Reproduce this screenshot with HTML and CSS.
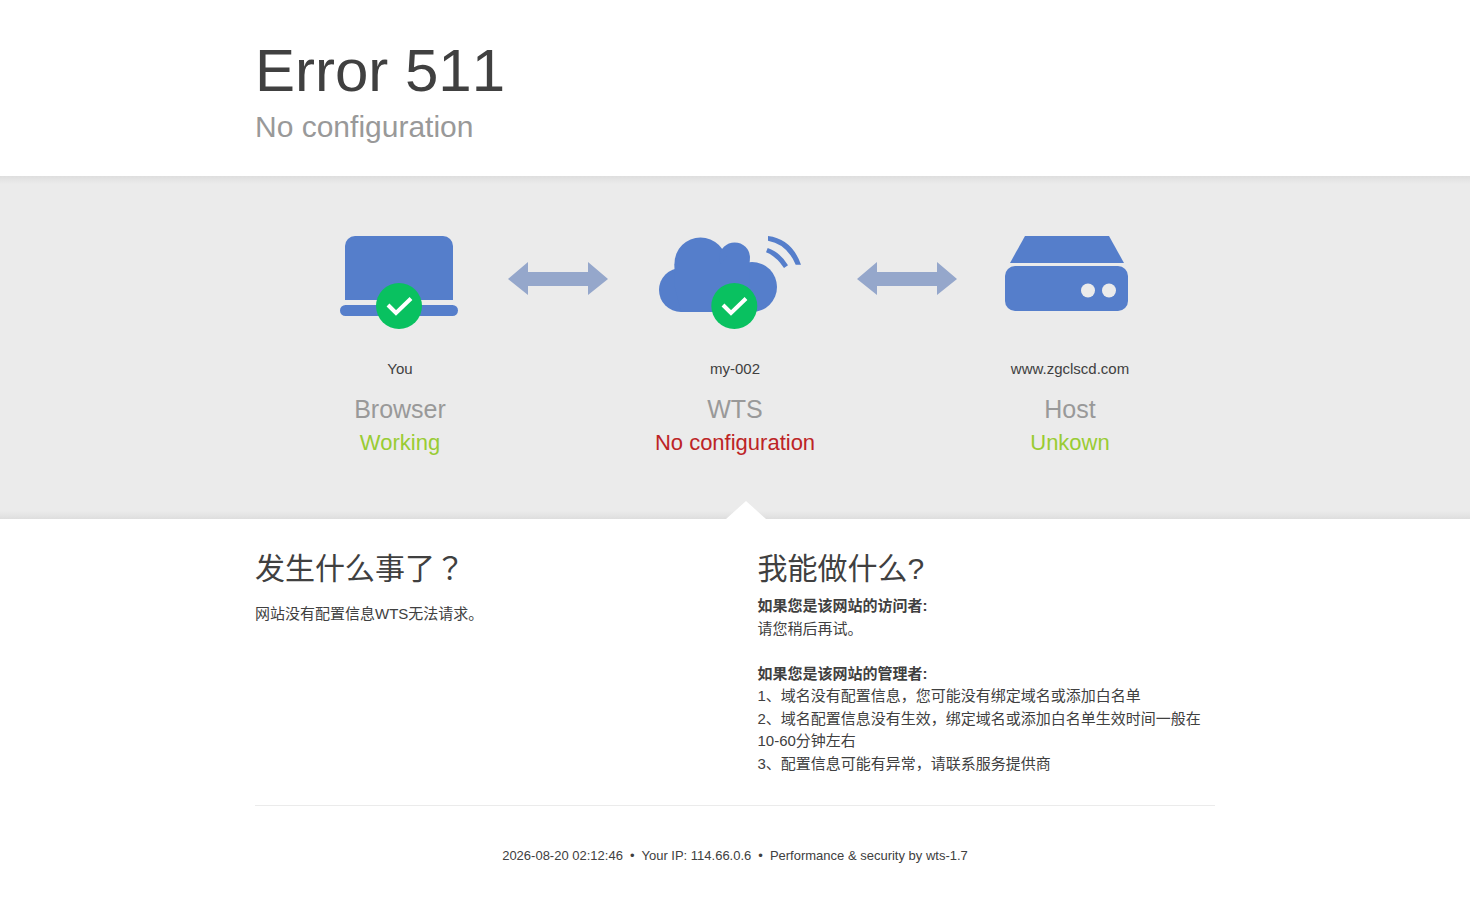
FILE: index.html
```
<!DOCTYPE html>
<html lang="en">
<head>
    <meta charset="UTF-8">
    <meta name="viewport" content="width=device-width, initial-scale=1.0">
    <title>Error 511 - No configuration</title>
    <link rel="stylesheet" href="styles.css">
</head>

<body>
    <header class="wrapper header">
        <h1>Error 511</h1>
        <p class="subtitle">No configuration</p>
    </header>

    <section class="status">
        <div class="wrapper status-row">
            <div class="status-item">
                <svg class="icon" width="120" height="95" viewBox="0 0 120 95" aria-hidden="true">
                    <path class="shape" d="M5 64V10A10 10 0 0 1 15 0H103A10 10 0 0 1 113 10V64Z"/>
                    <rect class="shape" x="0" y="69" width="118" height="11" rx="5.5"/>
                    <circle class="badge" cx="59" cy="70" r="23"/>
                    <path class="check" d="M48 69L56 77L71 62.5"/>
                </svg>
                <span class="name">You</span>
                <h3>Browser</h3>
                <span class="state ok">Working</span>
            </div>

            <svg class="arrow arrow-first" width="100" height="33" viewBox="0 0 100 33" aria-hidden="true">
                <path d="M0 17L20 0V10H80V0L100 17L80 33V24H20V33Z"/>
            </svg>

            <div class="status-item">
                <svg class="icon" width="160" height="95" viewBox="0 0 160 95" aria-hidden="true">
                    <circle class="shape" cx="26" cy="54" r="22"/>
                    <circle class="shape" cx="45.5" cy="27.5" r="26"/>
                    <circle class="shape" cx="79.7" cy="21.6" r="15.2"/>
                    <circle class="shape" cx="97" cy="51" r="25"/>
                    <path class="shape" d="M19.5 28H66L72 20H94.5V76H26L19.5 50Z"/>
                    <path class="shape" d="M113 0Q137 3 146 28.7H140.7Q132 8 113 4.7Z"/>
                    <path class="shape" d="M112.7 12Q125 16 133 29.3L129 32Q121 20 111 16.3Z"/>
                    <circle class="badge" cx="79.3" cy="70" r="23"/>
                    <path class="check" d="M68 69L76 77L91 62.5"/>
                </svg>
                <span class="name">my-002</span>
                <h3>WTS</h3>
                <span class="state error">No configuration</span>
            </div>

            <svg class="arrow arrow-second" width="100" height="33" viewBox="0 0 100 33" aria-hidden="true">
                <path d="M0 17L20 0V10H80V0L100 17L80 33V24H20V33Z"/>
            </svg>

            <div class="status-item">
                <svg class="icon" width="130" height="95" viewBox="0 0 130 95" aria-hidden="true">
                    <path class="shape" d="M20 0H104L119 27H5Z"/>
                    <rect class="shape" x="0" y="30" width="123" height="45" rx="10"/>
                    <circle class="led" cx="83" cy="54.5" r="7"/>
                    <circle class="led" cx="104" cy="54.5" r="7"/>
                </svg>
                <span class="name">www.zgclscd.com</span>
                <h3>Host</h3>
                <span class="state ok">Unkown</span>
            </div>
        </div>
    </section>

    <main class="wrapper">
        <div class="columns">
            <div class="what">
                <h2>发生什么事了？</h2>
                <p>网站没有配置信息WTS无法请求。</p>
            </div>
            <div class="how">
                <h2>我能做什么?</h2>
                <p><strong>如果您是该网站的访问者:</strong><br>请您稍后再试。</p>
                <p><strong>如果您是该网站的管理者:</strong><br>1、域名没有配置信息，您可能没有绑定域名或添加白名单<br>2、域名配置信息没有生效，绑定域名或添加白名单生效时间一般在10-60分钟左右<br>3、配置信息可能有异常，请联系服务提供商</p>
            </div>
        </div>

        <footer class="footer">
            <span>2026-08-20 02:12:46</span>
            <span>&bull;</span>
            <span>Your IP: 114.66.0.6</span>
            <span>&bull;</span>
            <span>Performance &amp; security by wts-1.7</span>
        </footer>
    </main>
</body>
</html>
```
FILE: styles.css
```
* {
    box-sizing: border-box;
}
body {
    margin: 0;
    font-family: "Liberation Sans", Arial, "Noto Sans CJK SC", sans-serif;
    font-size: 15px;
    line-height: 1.5;
    color: #404040;
    background: #fff;
}
h1, h2, h3, p {
    margin: 0;
    font-weight: normal;
}
.wrapper {
    max-width: 960px;
    margin: 0 auto;
}

/* Header */
.header {
    padding: 35px 0 29px;
}
h1 {
    font-size: 60px;
    line-height: 72px;
    font-kerning: none;
}
.subtitle {
    font-size: 30px;
    line-height: 40px;
    color: #999;
}

/* Status band */
.status {
    position: relative;
    padding: 60px 0 58px;
    background-color: #ebebeb;
    background-image: linear-gradient(to bottom, #dedede, #ebebeb 8px, #ebebeb calc(100% - 8px), #dedede);
}
.status::after {
    content: "";
    position: absolute;
    bottom: 0;
    left: calc(50% + 11px);
    margin-left: -20px;
    border: solid transparent;
    border-width: 0 20px 18px;
    border-bottom-color: #fff;
}
.status-row {
    display: grid;
    grid-template-columns: 160px 1fr 160px 1fr 160px;
    padding: 0 65px;
}
.status-item {
    display: flex;
    flex-direction: column;
    align-items: center;
    white-space: nowrap;
}
.icon {
    margin-bottom: 26px;
}
.shape {
    fill: #557ecb;
}
.badge {
    fill: #09c160;
}
.led {
    fill: #ebebeb;
}
.check {
    fill: none;
    stroke: #fff;
    stroke-width: 4;
}
.arrow {
    margin-top: 26px;
    fill: #95a7cb;
}
.arrow-first {
    margin-left: 28px;
}
.arrow-second {
    margin-left: 42px;
}
.name {
    line-height: 24px;
}
h3 {
    margin-top: 12px;
    font-size: 25px;
    line-height: 32px;
    color: #999;
}
.state {
    font-size: 22px;
    line-height: 36px;
}
.ok {
    color: #9c3;
}
.error {
    color: #bd2426;
}

/* Explanation */
.columns {
    display: grid;
    grid-template-columns: 1fr 1fr;
    gap: 45px;
    padding: 30px 0;
    border-bottom: 1px solid #ebebeb;
}
h2 {
    font-family: "Liberation Sans", Arial, "Noto Sans CJK JP", sans-serif;
    font-size: 30px;
    line-height: 40px;
}
.what p {
    margin-top: 14px;
}
.how h2 {
    margin-bottom: 6px;
}
.how p + p {
    margin-top: 1.5em;
}

/* Footer */
.footer {
    display: flex;
    flex-wrap: wrap;
    justify-content: center;
    gap: 7px;
    padding: 40px 0;
    font-size: 13px;
    line-height: 20px;
}
```
